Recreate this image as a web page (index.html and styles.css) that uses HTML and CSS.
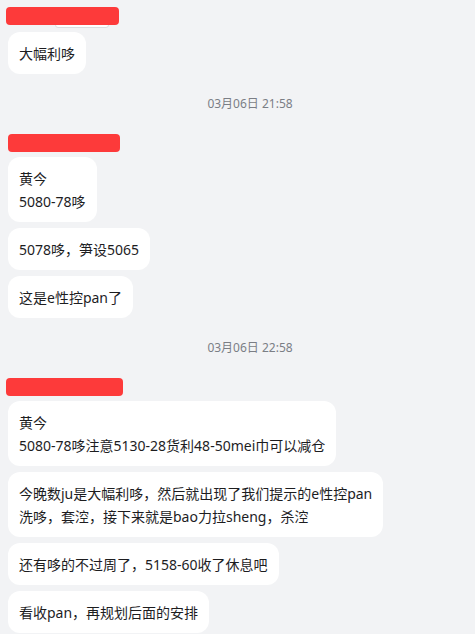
FILE: index.html
```html
<!DOCTYPE html>
<html lang="zh-CN">
<head>
    <meta charset="utf-8">
    <title>聊天记录</title>
    <link rel="stylesheet" href="styles.css">
</head>
<body>
    <div class="chat">
        <section class="group">
            <div class="sender">
                <span class="name-tag">成员名称</span>
                <span class="redact redact-a"></span>
            </div>
            <div class="bubble first">大幅利哆</div>
        </section>

        <div class="time">03月06日 21:58</div>

        <section class="group">
            <div class="sender">
                <span class="redact redact-b"></span>
            </div>
            <div class="bubble">黄今<br>5080-78哆</div>
            <div class="bubble">5078哆，笋设5065</div>
            <div class="bubble">这是e性控pan了</div>
        </section>

        <div class="time">03月06日 22:58</div>

        <section class="group">
            <div class="sender">
                <span class="redact redact-c"></span>
            </div>
            <div class="bubble">黄今<br>5080-78哆注意5130-28货利48-50mei巾可以减仓</div>
            <div class="bubble">今晚数ju是大幅利哆，然后就出现了我们提示的e性控pan<br>洗哆，套涳，接下来就是bao力拉sheng，杀涳</div>
            <div class="bubble">还有哆的不过周了，5158-60收了休息吧</div>
            <div class="bubble">看收pan，再规划后面的安排</div>
        </section>
    </div>
</body>
</html>
```

FILE: styles.css
```css
* { box-sizing: border-box; }
html { background-color: #f2f3f5; }
body {
    margin: 0;
    padding: 7px 0 0 8px;
    font-family: "Noto Sans", "Noto Sans CJK SC", sans-serif;
    font-size: 14px;
    color: #1d1d1f;
}
.chat {
    display: flex;
    flex-direction: column;
}
.group {
    display: flex;
    flex-direction: column;
    align-items: flex-start;
    gap: 6px;
}
.sender {
    position: relative;
    height: 18px;
    width: 120px;
    margin-bottom: -1px;
}
/* the redaction sits over the sender name */
.redact {
    position: absolute;
    top: 0;
    left: -2px;
    height: 18px;
    border-radius: 4px;
    background-color: #fd3a3a;
}
.redact-a { width: 113px; }
.redact-b { width: 112px; left: 0; }
.redact-c { width: 117px; }
.name-tag {
    position: absolute;
    top: 3px;
    left: 47px;
    width: 54px;
    height: 18px;
    border: 1px solid #dcdde0;
    border-radius: 3px;
    background-color: #fff;
    font-size: 10px;
    line-height: 16px;
    color: #999;
    text-align: center;
    overflow: hidden;
}
.bubble {
    background-color: #fff;
    border-radius: 12px;
    padding: 9.5px 11px;
    line-height: 23px;
    white-space: nowrap;
}
.bubble.first { margin-top: 2px; }
.time {
    padding: 20px 0 20px 17px;
    line-height: 20px;
    font-size: 12px;
    color: #7b7e85;
    text-align: center;
}
```
